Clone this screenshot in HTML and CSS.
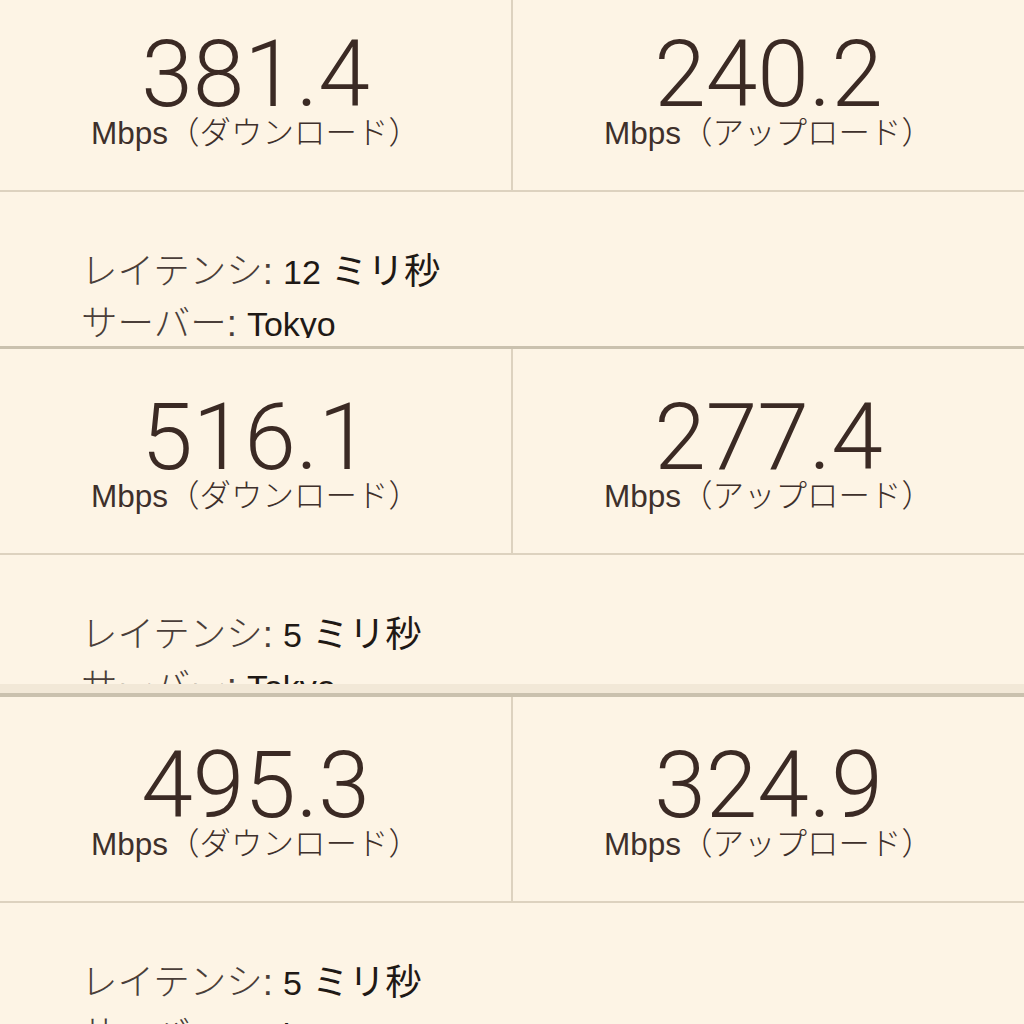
FILE: index.html
```html
<!DOCTYPE html>
<html lang="ja">
<head>
<meta charset="utf-8">
<title>スピードテスト結果</title>
<link rel="stylesheet" href="styles.css">
</head>
<body>
<div class="stack">
  <section class="shot shot-1">
    <div class="result">
      <div class="speeds">
        <div class="cell cell-left">
          <div class="value">381.4</div>
          <div class="unit">Mbps（ダウンロード）</div>
        </div>
        <div class="cell">
          <div class="value">240.2</div>
          <div class="unit">Mbps（アップロード）</div>
        </div>
      </div>
      <div class="info">
        <p class="line"><span class="key">レイテンシ:</span> <span class="val"><span class="lat">12</span> ミリ秒</span></p>
        <p class="line"><span class="key">サーバー:</span> <span class="val lat">Tokyo</span></p>
      </div>
    </div>
  </section>
  <section class="shot shot-2">
    <div class="result">
      <div class="speeds">
        <div class="cell cell-left">
          <div class="value">516.1</div>
          <div class="unit">Mbps（ダウンロード）</div>
        </div>
        <div class="cell">
          <div class="value">277.4</div>
          <div class="unit">Mbps（アップロード）</div>
        </div>
      </div>
      <div class="info">
        <p class="line"><span class="key">レイテンシ:</span> <span class="val"><span class="lat">5</span> ミリ秒</span></p>
        <p class="line"><span class="key">サーバー:</span> <span class="val lat">Tokyo</span></p>
      </div>
    </div>
    <div class="bar"></div>
  </section>
  <section class="shot shot-3">
    <div class="result">
      <div class="speeds">
        <div class="cell cell-left">
          <div class="value">495.3</div>
          <div class="unit">Mbps（ダウンロード）</div>
        </div>
        <div class="cell">
          <div class="value">324.9</div>
          <div class="unit">Mbps（アップロード）</div>
        </div>
      </div>
      <div class="info">
        <p class="line"><span class="key">レイテンシ:</span> <span class="val"><span class="lat">5</span> ミリ秒</span></p>
        <p class="line"><span class="key">サーバー:</span> <span class="val lat">Tokyo</span></p>
      </div>
    </div>
  </section>
</div>
</body>
</html>
```
FILE: styles.css
```css
html, body {
  margin: 0;
  padding: 0;
  background: #fdf4e5;
}

body {
  width: 1024px;
  height: 1024px;
  overflow: hidden;
  font-family: "Liberation Sans", "Noto Sans CJK JP", sans-serif;
  color: #3b2a24;
}

.stack {
  display: flex;
  flex-direction: column;
}

.shot {
  overflow: hidden;
  background: #fdf4e5;
  display: flex;
  flex-direction: column;
  flex: none;
}

.shot-1 {
  height: 346px;
  border-bottom: 3px solid #cac1ae;
}

.shot-1 .result {
  margin-top: -14px;
}

.shot-1 .info {
  height: 146px;
  box-sizing: border-box;
  overflow: hidden;
}

.shot-2 {
  height: 348px;
}

.shot-2 .result {
  flex: 1;
  overflow: hidden;
  min-height: 0;
}

.bar {
  flex: none;
  height: 9px;
  background: #f2e8d7;
  border-bottom: 4px solid #cac1ae;
}

.shot-3 {
  flex: 1;
}

.speeds {
  display: grid;
  grid-template-columns: 513px 1fr;
  border-bottom: 2px solid #ddd2bf;
}

.cell {
  height: 204px;
  padding-top: 43px;
  box-sizing: border-box;
  text-align: center;
}

.cell-left {
  border-right: 2px solid #ddd2bf;
}

.value {
  font-family: "Roboto", "Liberation Sans", sans-serif;
  font-weight: 300;
  font-size: 93px;
  line-height: 92px;
  color: #3b2a24;
}

.unit {
  font-size: 31.5px;
  line-height: 30px;
  margin-top: -3px;
  font-weight: 300;
  color: #3e302b;
}

.info {
  padding: 54px 0 0 81px;
}

.line {
  margin: 0;
  height: 52px;
  font-size: 36.5px;
  line-height: 52px;
  white-space: nowrap;
}

.key {
  color: #4a3e39;
  font-weight: 300;
}

.val {
  color: #1f1915;
}

.lat {
  font-size: 34px;
}
```
